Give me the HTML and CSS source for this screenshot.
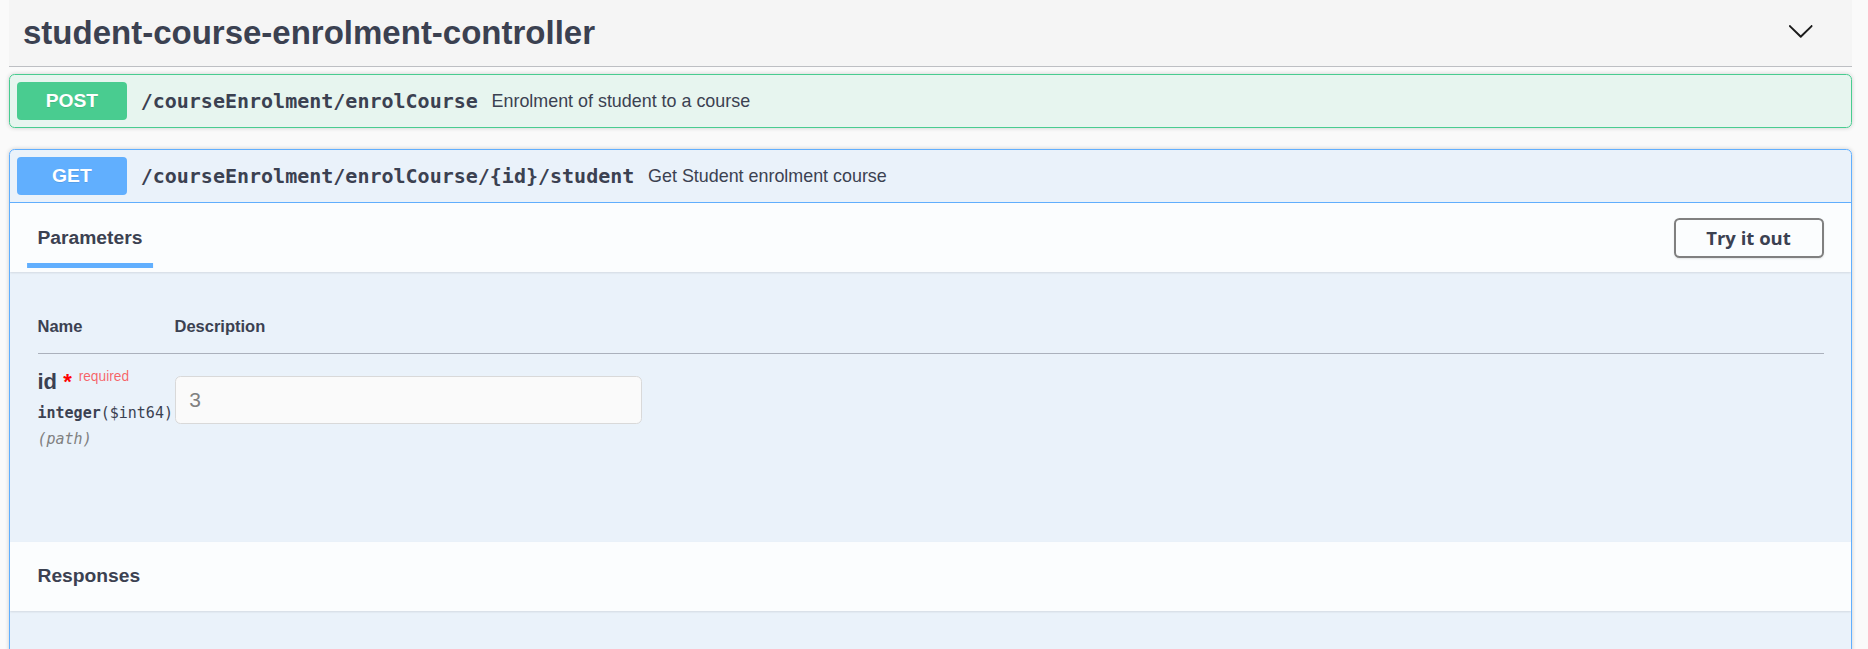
FILE: index.html
```html
<!DOCTYPE html>
<html lang="en">
<head>
<meta charset="utf-8">
<title>student-course-enrolment-controller</title>
<link rel="stylesheet" href="styles.css">
</head>
<body>
<section class="tag-section">
  <div class="tag-header">
    <h3 class="tag-title">student-course-enrolment-controller</h3>
    <svg class="chevron" viewBox="0 0 20 20" width="27.5" height="27.5" aria-hidden="true">
      <path d="M17.418 6.109c.272-.268.709-.268.979 0s.271.701 0 .969l-7.908 7.83c-.27.268-.707.268-.979 0l-7.908-7.83c-.27-.268-.27-.701 0-.969.271-.268.709-.268.979 0L10 13.250l7.418-7.141z"/>
    </svg>
  </div>
  <div class="ops">
    <div class="opblock post">
      <div class="summary">
        <span class="method">POST</span>
        <span class="path">/courseEnrolment/enrolCourse</span>
        <span class="desc">Enrolment of student to a course</span>
      </div>
    </div>
    <div class="opblock get">
      <div class="summary open">
        <span class="method">GET</span>
        <span class="path">/courseEnrolment/enrolCourse/{id}/student</span>
        <span class="desc">Get Student enrolment course</span>
      </div>
      <div class="section-header">
        <div class="tab"><h4><span>Parameters</span></h4></div>
        <button class="try-btn" type="button">Try it out</button>
      </div>
      <div class="table-container">
        <table class="params">
          <thead>
            <tr><th class="col-name">Name</th><th class="col-desc">Description</th></tr>
          </thead>
          <tbody>
            <tr>
              <td class="col-name">
                <div class="param-name">id<span class="star">&nbsp;*</span><span class="req">required</span></div>
                <div class="param-type">integer<span class="fmt">($int64)</span></div>
                <div class="param-in">(path)</div>
              </td>
              <td class="col-desc">
                <input class="param-input" type="text" value="3" disabled>
              </td>
            </tr>
          </tbody>
        </table>
      </div>
      <div class="section-header responses-header">
        <h4>Responses</h4>
      </div>
      <div class="responses-body"></div>
    </div>
  </div>
</section>
</body>
</html>
```

FILE: styles.css
```css
* { box-sizing: border-box; }

html, body {
  margin: 0;
  padding: 0;
  background: #fafafa;
  height: 649px;
  overflow: hidden;
}

body {
  font-family: "Liberation Sans", Arial, sans-serif;
  color: #3b4151;
}

.tag-section {
  margin-left: 9px;
  width: 1843px;
}

.tag-header {
  display: flex;
  align-items: center;
  justify-content: space-between;
  height: 67px;
  padding: 0 38px 0 14px;
  background: #f5f5f5;
  border-bottom: 1px solid rgba(59, 65, 81, 0.3);
}

.tag-title {
  margin: 0;
  font-size: 33px;
  font-weight: 700;
  line-height: 38px;
  color: #3b4151;
}

.chevron {
  display: block;
  margin-bottom: 5px;
  fill: #1b1b1b;
}

.ops {
  padding-top: 7px;
}

.opblock {
  border: 1px solid #000;
  border-radius: 5.5px;
  box-shadow: 0 0 4px rgba(0, 0, 0, 0.19);
  margin-bottom: 20.6px;
  overflow: hidden;
}

.opblock.post {
  background: rgba(73, 204, 144, 0.1);
  border-color: #49cc90;
}

.opblock.get {
  background: rgba(97, 175, 254, 0.1);
  border-color: #61affe;
  height: 506px;
}

.summary {
  display: flex;
  align-items: center;
  padding: 6.9px;
}

.summary.open {
  border-bottom: 1px solid #61affe;
}

.method {
  display: inline-block;
  min-width: 110px;
  padding: 8.25px 0;
  border-radius: 4px;
  font-size: 19.25px;
  font-weight: 700;
  line-height: 22px;
  text-align: center;
  color: #fff;
  text-shadow: 0 1px 0 rgba(0, 0, 0, 0.1);
}

.post .method { background: #49cc90; }
.get .method { background: #61affe; }

.path {
  padding: 0 13.75px;
  font-family: "DejaVu Sans Mono", "Liberation Mono", monospace;
  font-size: 20px;
  font-weight: 700;
  color: #3b4151;
}

.desc {
  font-size: 17.9px;
  color: #3b4151;
}

.section-header {
  display: flex;
  align-items: center;
  height: 69px;
  padding: 0 27.5px;
  background: rgba(255, 255, 255, 0.8);
  box-shadow: 0 1px 2px rgba(0, 0, 0, 0.1);
}

.tab h4 {
  margin: 0;
  font-size: 19.25px;
  font-weight: 700;
  line-height: 22px;
  color: #3b4151;
}

.tab h4 span {
  position: relative;
}

.tab h4 span::after {
  content: "";
  position: absolute;
  left: 50%;
  bottom: -20.6px;
  width: 120%;
  height: 5.5px;
  transform: translateX(-50%);
  background: #61affe;
}

.try-btn {
  margin-left: auto;
  width: 150px;
  height: 40px;
  padding: 0;
  border: 2.75px solid #808080;
  border-radius: 5.5px;
  background: transparent;
  box-shadow: 0 1px 2px rgba(0, 0, 0, 0.1);
  font-family: "Open Sans", sans-serif;
  font-size: 18.5px;
  font-weight: 700;
  color: #3b4151;
}

.table-container {
  padding: 28.5px 27.5px 79px;
}

.params {
  width: 100%;
  border-collapse: collapse;
}

.params th {
  padding: 16.5px 0;
  font-size: 16.5px;
  font-weight: 700;
  line-height: 19px;
  text-align: left;
  color: #3b4151;
  border-bottom: 1px solid rgba(59, 65, 81, 0.2);
}

.params th.col-name,
.params td.col-name {
  width: 137px;
}

.params td {
  padding: 15px 0 13.75px;
  vertical-align: top;
}

.param-name {
  font-size: 22px;
  font-weight: 700;
  line-height: 25px;
  color: #3b4151;
  white-space: nowrap;
}

.param-name .star {
  color: #ff0000;
}

.param-name .req {
  position: relative;
  top: -8.25px;
  padding: 6.9px;
  font-size: 13.75px;
  font-weight: 400;
  color: rgba(255, 0, 0, 0.6);
}

.param-type {
  padding: 7.5px 0 6.9px;
  font-family: "DejaVu Sans Mono", "Liberation Mono", monospace;
  font-size: 15px;
  font-weight: 700;
  line-height: 19px;
  color: #3b4151;
  white-space: nowrap;
}

.param-type .fmt {
  font-weight: 400;
}

.param-in {
  font-family: "DejaVu Sans Mono", "Liberation Mono", monospace;
  font-size: 15px;
  font-style: italic;
  line-height: 19px;
  color: #808080;
}

.param-input {
  display: block;
  width: 467px;
  height: 48px;
  margin: 7px 0;
  padding: 11px 13.75px;
  border: 1px solid #d9d9d9;
  border-radius: 5.5px;
  background: #fafafa;
  font-family: "Liberation Sans", Arial, sans-serif;
  font-size: 21px;
  line-height: 24px;
  color: #808080;
}

.responses-header h4 {
  margin: 0;
  font-size: 19.25px;
  font-weight: 700;
  color: #3b4151;
}

.responses-body {
  height: 60px;
}
```
